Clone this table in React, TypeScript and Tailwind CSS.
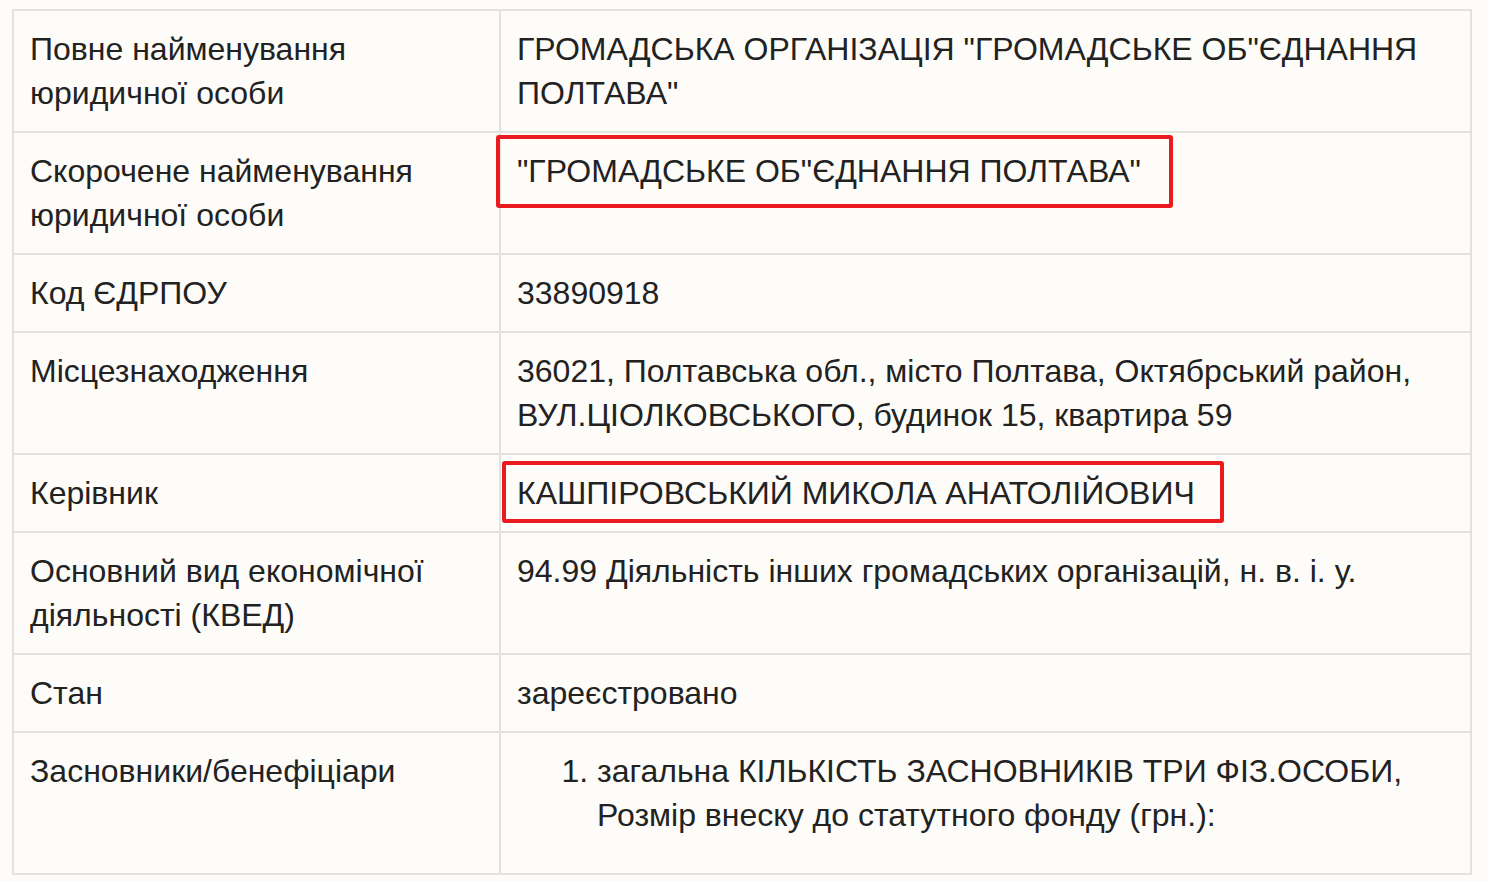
import React from "react";

const rows: { label: string; value: React.ReactNode; box?: string }[] = [
  {
    label: "Повне найменування юридичної особи",
    value: 'ГРОМАДСЬКА ОРГАНІЗАЦІЯ "ГРОМАДСЬКЕ ОБ"ЄДНАННЯ ПОЛТАВА"',
  },
  {
    label: "Скорочене найменування юридичної особи",
    value: '"ГРОМАДСЬКЕ ОБ"ЄДНАННЯ ПОЛТАВА"',
    box: "a",
  },
  { label: "Код ЄДРПОУ", value: "33890918" },
  {
    label: "Місцезнаходження",
    value:
      "36021, Полтавська обл., місто Полтава, Октябрський район, ВУЛ.ЦІОЛКОВСЬКОГО, будинок 15, квартира 59",
  },
  { label: "Керівник", value: "КАШПІРОВСЬКИЙ МИКОЛА АНАТОЛІЙОВИЧ", box: "b" },
  {
    label: "Основний вид економічної діяльності (КВЕД)",
    value: "94.99 Діяльність інших громадських організацій, н. в. і. у.",
  },
  { label: "Стан", value: "зареєстровано" },
];

export default function App() {
  return (
    <div
      className="w-[1488px] h-[882px] bg-[#fdfcf8] pt-[9px] pl-[12px] text-[#222] overflow-hidden"
      style={{ fontFamily: '"Liberation Sans", Arial, sans-serif' }}
    >
      <table className="w-[1460px] border-collapse text-[32px] leading-[44px]">
        <colgroup>
          <col className="w-[487px]" />
          <col />
        </colgroup>
        <tbody>
          {rows.map((r, i) => (
            <tr key={i}>
              <td className="border-2 border-[#e4e2dd] pl-[16px] pr-[16px] pt-[16px] pb-[16px] align-top">
                {r.label}
              </td>
              <td className="relative border-2 border-[#e4e2dd] pl-[16px] pr-[16px] pt-[16px] pb-[16px] align-top">
                {r.value}
                {r.box === "a" && (
                  <div className="absolute left-[-5px] top-[2px] w-[677px] h-[73px] border-[4px] border-[#ea1a1f] rounded-[3px]" />
                )}
                {r.box === "b" && (
                  <div className="absolute left-[1px] top-[6px] w-[722px] h-[62px] border-[4px] border-[#ea1a1f] rounded-[3px]" />
                )}
              </td>
            </tr>
          ))}
          <tr>
            <td className="border-2 border-[#e4e2dd] pl-[16px] pr-[16px] pt-[16px] pb-[36px] align-top">
              Засновники/бенефіціари
            </td>
            <td className="border-2 border-[#e4e2dd] pl-[16px] pr-[16px] pt-[16px] pb-[36px] align-top">
              <ol className="list-decimal pl-[80px] m-0">
                <li>
                  загальна КІЛЬКІСТЬ ЗАСНОВНИКІВ ТРИ ФІЗ.ОСОБИ, Розмір внеску до статутного фонду (грн.):
                </li>
              </ol>
            </td>
          </tr>
        </tbody>
      </table>
    </div>
  );
}
